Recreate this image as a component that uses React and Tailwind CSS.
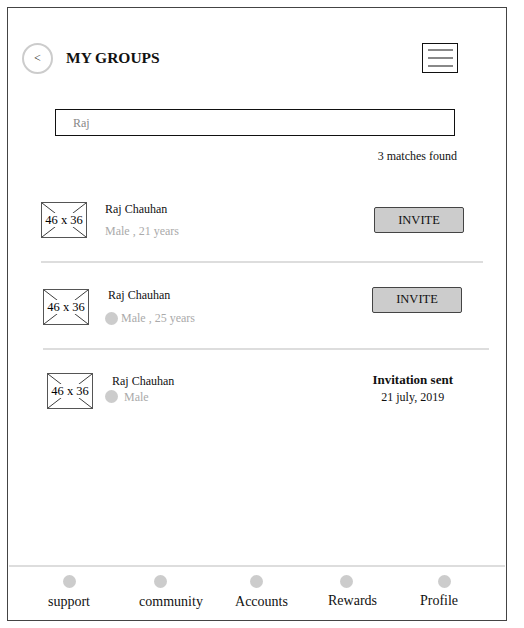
import React from "react";

function Placeholder() {
  return (
    <div className="relative w-[46px] h-[36px] border-[1.5px] border-[#555] flex items-center justify-center shrink-0">
      <svg className="absolute inset-0 w-full h-full" viewBox="0 0 46 36" preserveAspectRatio="none">
        <line x1="0" y1="0" x2="46" y2="36" stroke="#333" strokeWidth="1" />
        <line x1="46" y1="0" x2="0" y2="36" stroke="#333" strokeWidth="1" />
      </svg>
      <span className="relative bg-white text-[12.5px] leading-[14px] text-black px-[1px]">46 x 36</span>
    </div>
  );
}

function Dot({ className = "" }) {
  return <span className={`inline-block w-[13px] h-[13px] rounded-full bg-[#ccc] ${className}`} />;
}

function InviteButton() {
  return (
    <button className="w-[90px] h-[26px] bg-[#ccc] border border-[#444] rounded-[2px] text-[12.5px] text-[#111] font-['Liberation_Serif',serif]">
      INVITE
    </button>
  );
}

const navItems = [
  { label: "support", w: "w-[120px]", dot: "" },
  { label: "community", w: "w-[84px]", dot: "-translate-x-[11px]" },
  { label: "Accounts", w: "w-[97px]", dot: "-translate-x-[5px]" },
  { label: "Rewards", w: "w-[85px]", dot: "-translate-x-[6px]", up: true },
  { label: "Profile", w: "w-[88px]", dot: "translate-x-[5px]", up: true },
];

export default function App() {
  return (
    <div className="w-[524px] h-[628px] bg-white pt-[7px] pl-[7px] font-['Liberation_Serif','Times_New_Roman',serif]">
      <div className="w-[500px] h-[614px] border border-[#444] flex flex-col">
        {/* HEADER */}
        <div className="flex items-center mt-[35px] pl-[14px] h-[30px]">
          <div className="w-[31px] h-[31px] rounded-full border-2 border-[#ccc] flex items-center justify-center text-[12px] text-[#222]">
            &lt;
          </div>
          <h1 className="ml-[13px] text-[15.5px] font-bold text-[#111]">MY GROUPS</h1>
          <div className="ml-auto mr-[48px] w-[36px] h-[30px] border border-[#111] flex flex-col items-center justify-center gap-[6px]">
            <span className="block w-[25px] h-[2px] bg-[#888]" />
            <span className="block w-[25px] h-[2px] bg-[#888]" />
            <span className="block w-[25px] h-[2px] bg-[#888]" />
          </div>
        </div>

        {/* SEARCH */}
        <div className="mt-[36px] ml-[47px] w-[400px] h-[27px] border border-[#111] flex items-center pl-[17px] text-[12px] text-[#888]">
          Raj
        </div>
        <p className="mt-[11px] mr-[49px] self-end text-[12px] text-[#111]">3 matches found</p>

        {/* ROW 1 */}
        <div className="mt-[37px] ml-[33px] mr-[42px] flex items-center">
          <Placeholder />
          <div className="ml-[18px] flex flex-col text-[12px] leading-[14px]">
            <span className="text-[#111]">Raj Chauhan</span>
            <span className="mt-[8px] text-[#aaa]">Male , 21 years</span>
          </div>
          <div className="ml-auto">
            <InviteButton />
          </div>
        </div>
        <div className="mt-[23px] ml-[33px] w-[442px] h-[2px] bg-[#ddd]" />

        {/* ROW 2 */}
        <div className="mt-[25px] ml-[35px] mr-[44px] flex items-center">
          <Placeholder />
          <div className="ml-[16px] flex flex-col text-[12px] leading-[14px]">
            <span className="ml-[3px] text-[#111]">Raj Chauhan</span>
            <span className="mt-[9px] flex items-center text-[#aaa]">
              <Dot className="mr-[3px]" />
              Male , 25 years
            </span>
          </div>
          <div className="ml-auto -mt-[14px]">
            <InviteButton />
          </div>
        </div>
        <div className="mt-[23px] ml-[35px] w-[446px] h-[2px] bg-[#ddd]" />

        {/* ROW 3 */}
        <div className="mt-[23px] ml-[39px] mr-[53px] flex items-center">
          <Placeholder />
          <div className="ml-[12px] flex flex-col text-[12px] leading-[14px] -mt-[5px]">
            <span className="ml-[7px] text-[#111]">Raj Chauhan</span>
            <span className="mt-[2px] flex items-center text-[#aaa]">
              <Dot className="mr-[6px]" />
              Male
            </span>
          </div>
          <div className="ml-auto flex flex-col items-center leading-[14px] -mt-[6px]">
            <span className="font-bold text-[13px] text-[#111]">Invitation sent</span>
            <span className="mt-[3px] text-[12px] text-[#111]">21 july, 2019</span>
          </div>
        </div>

        {/* BOTTOM NAV */}
        <div className="mt-auto border-t-2 border-[#ddd] ml-[1px] mr-[1px] h-[55px] flex">
          {navItems.map((n) => (
            <div key={n.label} className={`${n.w} flex flex-col items-center`}>
              <Dot className={`mt-[8px] ${n.dot}`} />
              <span className={`${n.up ? "mt-[5px]" : "mt-[6px]"} text-[14px] leading-[16px] text-[#111]`}>
                {n.label}
              </span>
            </div>
          ))}
        </div>
      </div>
    </div>
  );
}
